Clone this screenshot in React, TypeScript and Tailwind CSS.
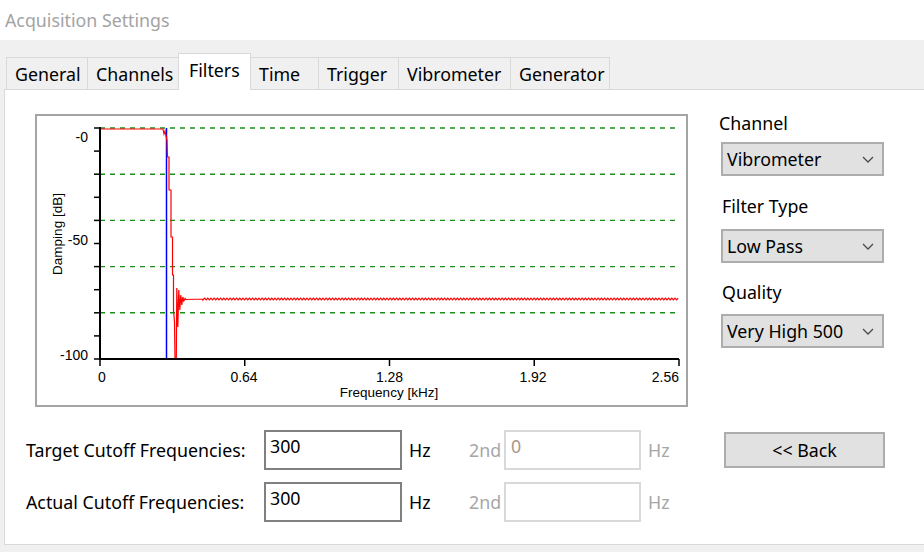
import React from "react";

const tabs = [
  { name: "General", w: "w-[81px]" },
  { name: "Channels", w: "w-[91px]" },
  { name: "Filters", w: "w-[73px]" },
  { name: "Time", w: "w-[67px]" },
  { name: "Trigger", w: "w-[80px]" },
  { name: "Vibrometer", w: "w-[112px]" },
  { name: "Generator", w: "w-[100px]" },
];

function Chevron() {
  return (
    <svg width="12" height="7" viewBox="0 0 12 7">
      <polyline points="1,1 6,6 11,1" fill="none" stroke="#4a4a4a" strokeWidth="1.3" />
    </svg>
  );
}

function Select({ value }: { value: string }) {
  return (
    <div className="ml-[2px] w-[163px] h-[34px] border-2 border-[#adadad] bg-[#e1e1e1] flex items-center justify-between pl-[4px] pr-[8px] text-black">
      <span>{value}</span>
      <Chevron />
    </div>
  );
}

function Chart() {
  const y0 = 128;
  const y100 = 359;
  const x0 = 100;
  const x1 = 679;
  const step = (y100 - y0) / 10;
  const grid = [0, 2, 4, 6, 8].map((i) => y0 + i * step);
  const yTicks = Array.from({ length: 11 }, (_, i) => y0 + i * step);
  const xTicks = [0, 1, 2, 3, 4].map((i) => x0 + (i * (x1 - x0)) / 4);

  let d =
    "M100 129 L163 129 L164 134 L165 131 L166 136 L167 140 L167.5 157 L169 157 L169 190 L171 190 L171 237 L172.5 237 L172.5 275 L173.5 275 L173.5 310 L174.5 322 L175 359 L176.3 359 L176.8 288 L177.8 327 L178.8 290 L179.8 310 L180.8 295 L181.8 305 L182.8 297 L183.8 301 L185 298.5 L186 299.5 L203 299";
  let i = 0;
  for (let x = 203; x <= x1; x += 1.6, i++) {
    d += ` L${x.toFixed(1)} ${i % 2 ? 298.1 : 299.9}`;
  }

  return (
    <svg width="649" height="289" viewBox="37 116 649 289" className="block">
      <g fontFamily="'Liberation Sans', Arial, sans-serif" fontSize="14" fill="#000">
        {grid.map((y) => (
          <line key={y} x1={x0} x2={x1} y1={y} y2={y} stroke="#1a901a" strokeWidth="1.4" strokeDasharray="5 5" />
        ))}
        <line x1={166.5} x2={166.5} y1={y0} y2={y100} stroke="#0000ff" strokeWidth="1.5" />
        <path d={d} fill="none" stroke="#ff0000" strokeWidth="1.2" />
        <line x1={x0} x2={x0} y1={y0 - 1} y2={y100 + 1} stroke="#000" strokeWidth="2" />
        <line x1={x0} x2={x1} y1={y100} y2={y100} stroke="#000" strokeWidth="2" />
        {yTicks.map((y) => (
          <line key={y} x1={94} x2={x0} y1={y} y2={y} stroke="#000" strokeWidth="1.5" />
        ))}
        {xTicks.map((x) => (
          <line key={x} x1={x} x2={x} y1={y100} y2={y100 + 7} stroke="#000" strokeWidth="1.5" />
        ))}
        <text x={88} y={142} textAnchor="end">-0</text>
        <text x={88} y={245} textAnchor="end">-50</text>
        <text x={88} y={360} textAnchor="end">-100</text>
        <text x={98} y={382} textAnchor="start">0</text>
        <text x={244} y={382} textAnchor="middle">0.64</text>
        <text x={389.5} y={382} textAnchor="middle">1.28</text>
        <text x={533} y={382} textAnchor="middle">1.92</text>
        <text x={679} y={382} textAnchor="end">2.56</text>
        <text x={389} y={397} textAnchor="middle" fontSize="13.5">Frequency [kHz]</text>
        <text x={0} y={0} textAnchor="middle" fontSize="13.5" transform="translate(62 234) rotate(-90)">
          Damping [dB]
        </text>
      </g>
    </svg>
  );
}

function FieldRow({ label, value, second }: { label: string; value: string; second: string }) {
  return (
    <div className="flex items-center h-[40px]">
      <div className="w-[238px] text-black">{label}</div>
      <div className="w-[138px] h-[40px] border-2 border-[#808080] bg-white pl-[4px] pt-[2px] leading-[24px] text-black">
        {value}
      </div>
      <div className="w-[67px] pl-[7px] text-black">Hz</div>
      <div className="w-[35px] text-[#a6a6a6]">2nd</div>
      <div className="w-[137px] h-[40px] border-2 border-[#d9d9d9] bg-white pl-[5px] pt-[2px] leading-[24px] text-[#a8978a]">
        {second}
      </div>
      <div className="pl-[7px] text-[#a6a6a6]">Hz</div>
    </div>
  );
}

export default function App() {
  return (
    <div className="w-[924px] h-[552px] overflow-hidden bg-[#f0f0f0] flex flex-col font-['Noto_Sans','Open_Sans',sans-serif] text-[17.8px]">
      <div className="h-[40px] shrink-0 bg-white pl-[5px] flex items-center text-[#a3a3a3]">Acquisition Settings</div>
      <div className="flex-1 flex flex-col pl-[4px] pb-[7px]">
        <div className="h-[49px] shrink-0 flex items-end pl-[2px]">
          {tabs.map((t, idx) => {
            const selected = t.name === "Filters";
            const afterSel = idx === 3;
            const last = idx === tabs.length - 1;
            if (selected) {
              return (
                <div
                  key={t.name}
                  className={`${t.w} h-[37px] -mb-[1px] relative z-10 bg-white border-t border-l border-r border-[#d9d9d9] pl-[10px] pt-[4px] leading-[24px] text-black`}
                >
                  {t.name}
                </div>
              );
            }
            return (
              <div
                key={t.name}
                className={`${t.w} h-[33px] -mb-[1px] bg-[#f0f0f0] border-t border-[#d9d9d9] ${afterSel ? "" : "border-l"} ${last ? "border-r" : ""} pl-[8px] pt-[4px] leading-[24px] text-black`}
              >
                {t.name}
              </div>
            );
          })}
        </div>
        <div className="flex-1 bg-white border border-r-0 border-[#d9d9d9] flex flex-col">
          <div className="flex items-start">
            <div className="ml-[30px] mt-[24px] w-[653px] h-[293px] border-2 border-[#a5a5a5] bg-white">
              <Chart />
            </div>
            <div className="ml-[31px] mt-[21px] flex flex-col">
              <div className="h-[24px] leading-[24px] text-black">Channel</div>
              <div className="mt-[7px]">
                <Select value="Vibrometer" />
              </div>
              <div className="mt-[18px] h-[24px] leading-[24px] pl-[3px] text-black">Filter Type</div>
              <div className="mt-[11px]">
                <Select value="Low Pass" />
              </div>
              <div className="mt-[17px] h-[24px] leading-[24px] pl-[3px] text-black">Quality</div>
              <div className="mt-[10px]">
                <Select value="Very High 500" />
              </div>
            </div>
          </div>
          <div className="flex items-start mt-[23px] pl-[21px]">
            <div className="flex flex-col gap-[12px]">
              <FieldRow label="Target Cutoff Frequencies:" value="300" second="0" />
              <FieldRow label="Actual Cutoff Frequencies:" value="300" second="" />
            </div>
            <div className="ml-[auto] mr-[39px] mt-[2px] w-[161px] h-[36px] border-2 border-[#adadad] bg-[#e1e1e1] flex items-center justify-center text-black">
              &lt;&lt; Back
            </div>
          </div>
        </div>
      </div>
    </div>
  );
}
